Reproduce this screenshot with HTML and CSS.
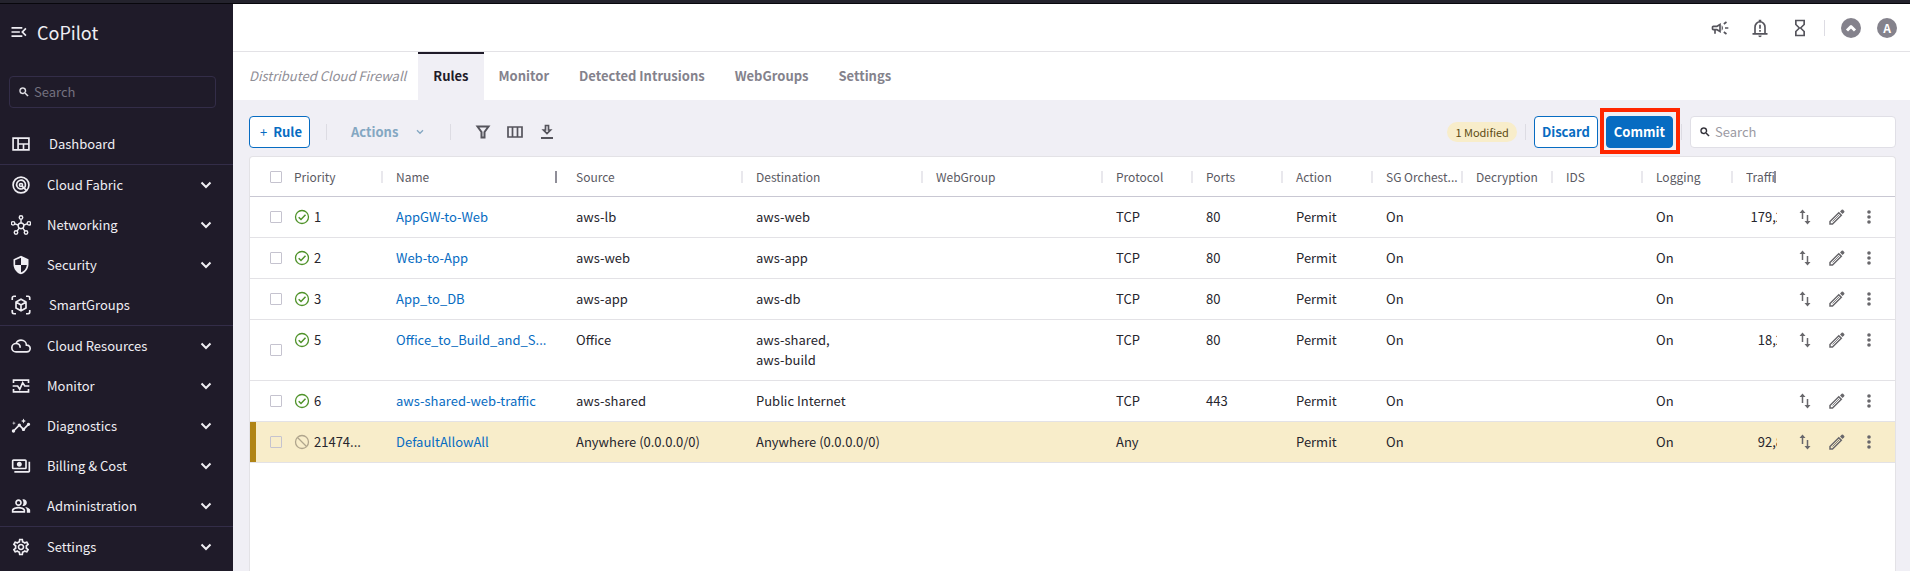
FILE: index.html
```html
<!DOCTYPE html>
<html lang="en">
<head>
<meta charset="utf-8">
<title>CoPilot</title>
<link rel="stylesheet" href="styles.css">
</head>
<body>
<svg class="sprite" aria-hidden="true">
  <symbol id="menu-open" viewBox="0 0 24 24"><path d="M3 18h13v-2H3v2zm0-5h10v-2H3v2zm0-7v2h13V6H3zm18 9.59L17.42 12 21 8.41 19.59 7l-5 5 5 5L21 15.59z"/></symbol>
  <symbol id="search" viewBox="0 0 24 24"><path d="M15.5 14h-.79l-.28-.27A6.47 6.47 0 0 0 16 9.5 6.5 6.5 0 1 0 9.500 16c1.610 0 3.090-.59 4.230-1.570l.27.28v.79l5 4.990L20.490 19l-4.990-5zm-6 0C7.010 14 5 11.990 5 9.500S7.010 5 9.500 5 14 7.010 14 9.500 11.990 14 9.500 14z" stroke="currentColor" stroke-width=".8"/></symbol>
  <symbol id="dashboard" viewBox="0 0 24 24"><path d="M2.500 5h19v14h-19zM8.500 5v14M8.500 12h13M15 12v7" fill="none" stroke="currentColor" stroke-width="2"/></symbol>
  <symbol id="fabric" viewBox="0 0 24 24"><g fill="none" stroke="currentColor" stroke-width="2"><circle cx="12" cy="12" r="9.500"/><path d="M15.500 15.500A5.300 5.300 0 1 1 17.300 12c0 1.500-.5 2.600-1.300 3.500"/><circle cx="12" cy="12" r="1.800"/><path d="M13 13l5.500 5.500"/></g></symbol>
  <symbol id="network" viewBox="0 0 24 24"><g fill="none" stroke="currentColor" stroke-width="1.700"><circle cx="12" cy="13" r="3.400"/><circle cx="12" cy="3" r="2.100"/><circle cx="2.500" cy="10" r="2.100"/><circle cx="21.500" cy="10" r="2.100"/><circle cx="6" cy="21" r="2.100"/><circle cx="18" cy="21" r="2.100"/><path d="M12 5v4.500M4.600 10.700l4 1.300M19.400 10.700l-4 1.300M7.300 19.200l2.600-3.400M16.700 19.200l-2.600-3.400"/></g></symbol>
  <symbol id="shield" viewBox="0 0 24 24"><path d="M12 1L3 5v6c0 5.550 3.840 10.740 9 12 5.160-1.260 9-6.450 9-12V5l-9-4zm0 10.990h7c-.53 4.120-3.280 7.790-7 8.940V12H5V6.300l7-3.110v8.800z" /></symbol>
  <symbol id="cube" viewBox="0 0 24 24"><g fill="none" stroke="currentColor" stroke-width="2" stroke-linejoin="round"><path d="M1.500 6V3.500a2 2 0 0 1 2-2H6M18 1.500h2.500a2 2 0 0 1 2 2V6M22.500 18v2.500a2 2 0 0 1-2 2H18M6 22.500H3.500a2 2 0 0 1-2-2V18"/><path d="M12 5l6 3.500v7L12 19l-6-3.500v-7zM6 8.500l6 3.500 6-3.500M12 12v7"/></g></symbol>
  <symbol id="cloud" viewBox="0 0 24 24"><path d="M6 19h13a4 4 0 0 0 0-8h-.5C18.500 7.500 15.500 5 12 5 9 5 7 6.500 6 9a5 5 0 0 0 0 10zM6 9c3 0 5 2 5 5" fill="none" stroke="currentColor" stroke-width="2"/></symbol>
  <symbol id="monitor" viewBox="0 0 24 24"><path d="M3 8.500V5h18v3.500M3 15.500V19h18v-3.500M2 12h6l2.500 4 3.500-8 2.500 4H22" fill="none" stroke="currentColor" stroke-width="2"/></symbol>
  <symbol id="insights" viewBox="0 0 24 24"><path d="M21 8c-1.450 0-2.260 1.440-1.930 2.510l-3.550 3.560c-.3-.09-.74-.09-1.040 0l-2.550-2.550C12.270 10.450 11.460 9 10 9c-1.450 0-2.270 1.440-1.930 2.520l-4.560 4.550C2.440 15.740 1 16.550 1 18c0 1.100.9 2 2 2 1.450 0 2.260-1.440 1.930-2.510l4.550-4.560c.3.09.74.09 1.040 0l2.550 2.550C12.730 16.550 13.540 18 15 18c1.450 0 2.270-1.440 1.930-2.520l3.560-3.550C21.560 12.260 23 11.450 23 10c0-1.100-.9-2-2-2zM15 9l.94-2.070L18 6l-2.060-.93L15 3l-.92 2.070L12 6l2.080.93zM3.500 11L4 9l2-.5L4 8l-.5-2L3 8l-2 .5L3 9z"/></symbol>
  <symbol id="billing" viewBox="0 0 24 24"><path d="M19 14V6c0-1.100-.9-2-2-2H3c-1.100 0-2 .9-2 2v8c0 1.100.9 2 2 2h14c1.100 0 2-.9 2-2zm-2 0H3V6h14v8zm-7-7c-1.660 0-3 1.340-3 3s1.340 3 3 3 3-1.340 3-3-1.340-3-3-3zm13 0v11c0 1.100-.9 2-2 2H4v-2h17V7h2z"/></symbol>
  <symbol id="people" viewBox="0 0 24 24"><path d="M16.670 13.130C18.040 14.060 19 15.320 19 17v3h4v-3c0-2.180-3.570-3.470-6.330-3.870zM15 12c2.210 0 4-1.790 4-4s-1.790-4-4-4c-.47 0-.91.1-1.330.24C14.500 5.270 15 6.580 15 8s-.5 2.730-1.330 3.760c.42.14.86.24 1.330.24zM9 12c2.210 0 4-1.790 4-4s-1.790-4-4-4-4 1.790-4 4 1.790 4 4 4zm0-6c1.100 0 2 .9 2 2s-.9 2-2 2-2-.9-2-2 .9-2 2-2zM9 13c-2.670 0-8 1.340-8 4v3h16v-3c0-2.660-5.330-4-8-4zm6 5H3v-.99C3.200 16.290 6.300 15 9 15s5.800 1.290 6 2v1z"/></symbol>
  <symbol id="gear" viewBox="0 0 24 24"><path d="M19.430 12.980c.04-.32.07-.64.07-.98 0-.34-.03-.66-.07-.98l2.110-1.650c.19-.15.24-.42.12-.64l-2-3.460c-.09-.16-.26-.25-.44-.25-.06 0-.12.01-.17.03l-2.490 1c-.52-.4-1.080-.73-1.690-.98l-.38-2.650C14.460 2.180 14.250 2 14 2h-4c-.25 0-.46.18-.49.42l-.38 2.650c-.61.25-1.170.59-1.690.98l-2.490-1c-.06-.02-.12-.03-.18-.03-.17 0-.34.09-.43.25l-2 3.460c-.13.22-.07.49.12.64l2.110 1.650c-.04.32-.07.65-.07.98 0 .33.03.66.07.98l-2.110 1.650c-.19.15-.24.42-.12.64l2 3.460c.09.16.26.25.44.25.06 0 .12-.01.17-.03l2.490-1c.52.4 1.080.73 1.690.98l.38 2.650c.03.24.24.42.49.42h4c.25 0 .46-.18.49-.42l.38-2.650c.61-.25 1.170-.59 1.690-.98l2.490 1c.06.02.12.03.18.03.17 0 .34-.09.43-.25l2-3.460c.12-.22.07-.49-.12-.64l-2.110-1.650zm-1.980-1.710c.04.31.05.52.05.73 0 .21-.02.43-.05.73l-.14 1.130.89.7 1.080.84-.7 1.210-1.270-.51-1.040-.42-.9.68c-.43.32-.84.56-1.250.73l-1.060.43-.16 1.130-.2 1.350h-1.400l-.19-1.350-.16-1.130-1.060-.43c-.43-.18-.83-.41-1.230-.71l-.91-.7-1.060.43-1.270.51-.7-1.210 1.080-.84.89-.7-.14-1.130c-.03-.31-.05-.54-.05-.74s.02-.43.05-.73l.14-1.130-.89-.7-1.080-.84.7-1.210 1.270.51 1.040.42.9-.68c.43-.32.84-.56 1.250-.73l1.060-.43.16-1.130.2-1.350h1.390l.19 1.350.16 1.130 1.060.43c.43.18.83.41 1.230.71l.91.7 1.060-.43 1.270-.51.7 1.210-1.070.85-.89.7.14 1.130zM12 8c-2.210 0-4 1.790-4 4s1.790 4 4 4 4-1.790 4-4-1.790-4-4-4zm0 6c-1.100 0-2-.9-2-2s.9-2 2-2 2 .9 2 2-.9 2-2 2z"/></symbol>
  <symbol id="chevron" viewBox="0 0 12 12"><path d="M1.500 3.500L6 8l4.500-4.500" fill="none" stroke="currentColor" stroke-width="2"/></symbol>
  <symbol id="megaphone" viewBox="0 0 24 24"><path d="M18 11v2h4v-2h-4zm-2 6.610c.96.71 2.210 1.650 3.200 2.390.4-.53.8-1.070 1.200-1.600-.99-.74-2.240-1.680-3.200-2.400-.4.54-.8 1.080-1.200 1.610zM20.400 5.600c-.4-.53-.8-1.070-1.200-1.600-.99.74-2.240 1.680-3.200 2.400.4.53.8 1.070 1.200 1.600.96-.72 2.210-1.650 3.200-2.400zM4 9c-1.100 0-2 .9-2 2v2c0 1.100.9 2 2 2h1v4h2v-4h1l5 3V6L8 9H4zm5.030 1.710L11 9.530v4.940l-1.970-1.180-.48-.29H4v-2h4.550l.48-.29zM15.500 12c0-1.330-.58-2.530-1.500-3.350v6.690c.92-.81 1.500-2.010 1.500-3.340z"/></symbol>
  <symbol id="bell" viewBox="0 0 24 24"><path d="M3 19h18M6 19v-8a6 6.500 0 0 1 12 0v8" fill="none" stroke="currentColor" stroke-width="2"/><path d="M10.500 2h3v3h-3zM10 21h4a2 2 0 0 1-4 0zM11 8h2v5h-2zM11 14.500h2v2h-2z"/></symbol>
  <symbol id="hourglass" viewBox="0 0 24 24"><path d="M6 2v6h.01L6 8.010 10 12l-4 4 .01.01H6V22h12v-5.990h-.01L18 16l-4-4 4-3.990-.01-.01H18V2H6zm10 14.500V20H8v-3.500l4-4 4 4zm-4-5l-4-4V4h8v3.500l-4 4z"/></symbol>
  <symbol id="peak" viewBox="0 0 20 20"><path d="M6 12.500L10 8.500l4 4" fill="none" stroke="currentColor" stroke-width="3" stroke-linejoin="round"/></symbol>
  <symbol id="filter" viewBox="0 0 16 16"><path d="M2.500 2.500h11L9.500 8v5.500h-3V8z" fill="none" stroke="currentColor" stroke-width="2"/></symbol>
  <symbol id="columns" viewBox="0 0 16 16"><path d="M1 3h14v10H1zM5.500 3v10M10.500 3v10" fill="none" stroke="currentColor" stroke-width="1.700"/></symbol>
  <symbol id="download" viewBox="0 0 16 16"><path d="M2 13h12v2H2z"/><path d="M6.500 1.500h3V6h2L8 9.500 4.500 6h2z" fill="none" stroke="currentColor" stroke-width="1.700"/></symbol>
  <symbol id="ok" viewBox="0 0 16 16"><circle cx="8" cy="8" r="6.500" fill="none" stroke="currentColor" stroke-width="1.300"/><path d="M4.700 8.200L7 10.500l4.500-4.700" fill="none" stroke="currentColor" stroke-width="1.500"/></symbol>
  <symbol id="off" viewBox="0 0 16 16"><circle cx="8" cy="8" r="6.500" fill="none" stroke="currentColor" stroke-width="1.300"/><path d="M3.500 3.500l9 9" fill="none" stroke="currentColor" stroke-width="1.300"/></symbol>
  <symbol id="swap" viewBox="0 0 16 16"><path d="M5.500 10V2M10.500 6v8" fill="none" stroke="currentColor" stroke-width="1.500"/><path d="M5.500 .5L8.500 4h-6zM10.500 15.500l3-3.500h-6z"/></symbol>
  <symbol id="edit" viewBox="0 0 16 16"><path d="M1 12.500L9.800 3.700l2.500 2.500L3.500 15H1z" fill="none" stroke="currentColor" stroke-width="1.500"/><path d="M3.500 12.500l7-7" stroke="currentColor" stroke-width=".8"/><path d="M11 2.500l1.700-1.700a1 1 0 0 1 1.400 0l1.100 1.100a1 1 0 0 1 0 1.400L13.500 5z"/></symbol>
  <symbol id="more" viewBox="0 0 16 16"><circle cx="8" cy="3" r="1.800"/><circle cx="8" cy="8" r="1.800"/><circle cx="8" cy="13" r="1.800"/></symbol>
</svg>

<div class="topstrip"></div>
<div class="app">
  <aside class="sidebar">
    <div class="brand">
      <button class="icon-btn" aria-label="Collapse menu"><svg class="icon-20"><use href="#menu-open"/></svg></button>
      <span>CoPilot</span>
    </div>
    <label class="search search-dark"><svg class="icon-12"><use href="#search"/></svg><input type="text" placeholder="Search" aria-label="Search menu"></label>
    <nav class="nav">
      <a class="nav-item direct" href="#"><svg class="icon-20"><use href="#dashboard"/></svg><span>Dashboard</span></a>
      <hr>
      <button class="nav-item"><svg class="icon-20"><use href="#fabric"/></svg><span>Cloud Fabric</span><svg class="icon-12"><use href="#chevron"/></svg></button>
      <button class="nav-item"><svg class="icon-20"><use href="#network"/></svg><span>Networking</span><svg class="icon-12"><use href="#chevron"/></svg></button>
      <button class="nav-item"><svg class="icon-20"><use href="#shield"/></svg><span>Security</span><svg class="icon-12"><use href="#chevron"/></svg></button>
      <a class="nav-item direct" href="#"><svg class="icon-20"><use href="#cube"/></svg><span>SmartGroups</span></a>
      <hr>
      <button class="nav-item"><svg class="icon-20"><use href="#cloud"/></svg><span>Cloud Resources</span><svg class="icon-12"><use href="#chevron"/></svg></button>
      <button class="nav-item"><svg class="icon-20"><use href="#monitor"/></svg><span>Monitor</span><svg class="icon-12"><use href="#chevron"/></svg></button>
      <button class="nav-item"><svg class="icon-20"><use href="#insights"/></svg><span>Diagnostics</span><svg class="icon-12"><use href="#chevron"/></svg></button>
      <button class="nav-item"><svg class="icon-20"><use href="#billing"/></svg><span>Billing &amp; Cost</span><svg class="icon-12"><use href="#chevron"/></svg></button>
      <button class="nav-item"><svg class="icon-20"><use href="#people"/></svg><span>Administration</span><svg class="icon-12"><use href="#chevron"/></svg></button>
      <hr>
      <button class="nav-item"><svg class="icon-20"><use href="#gear"/></svg><span>Settings</span><svg class="icon-12"><use href="#chevron"/></svg></button>
    </nav>
  </aside>

  <main class="main">
    <header class="header">
      <button class="icon-btn" aria-label="Announcements"><svg class="icon-20"><use href="#megaphone"/></svg></button>
      <button class="icon-btn" aria-label="Alerts"><svg class="icon-20"><use href="#bell"/></svg></button>
      <button class="icon-btn" aria-label="Tasks"><svg class="icon-20"><use href="#hourglass"/></svg></button>
      <span class="divider"></span>
      <button class="avatar" aria-label="Controller"><svg class="icon-20"><use href="#peak"/></svg></button>
      <button class="avatar">A</button>
    </header>
    <nav class="tabs">
      <span class="crumb">Distributed Cloud Firewall</span>
      <a class="tab active" href="#">Rules</a>
      <a class="tab" href="#">Monitor</a>
      <a class="tab" href="#">Detected Intrusions</a>
      <a class="tab" href="#">WebGroups</a>
      <a class="tab" href="#">Settings</a>
    </nav>
    <section class="content">
      <div class="toolbar">
        <button class="btn add"><span class="plus">+</span>Rule</button>
        <span class="divider"></span>
        <button class="actions-btn" disabled>Actions<svg class="icon-8"><use href="#chevron"/></svg></button>
        <span class="divider"></span>
        <div class="tools">
          <button class="icon-btn" aria-label="Filter"><svg class="icon-16"><use href="#filter"/></svg></button>
          <button class="icon-btn" aria-label="Columns"><svg class="icon-16"><use href="#columns"/></svg></button>
          <button class="icon-btn" aria-label="Download"><svg class="icon-16"><use href="#download"/></svg></button>
        </div>
        <div class="right">
          <span class="pill">1 Modified</span>
          <span class="divider"></span>
          <button class="btn">Discard</button>
          <span class="highlight"><button class="btn primary">Commit</button></span>
          <span class="divider"></span>
          <label class="search"><svg class="icon-12"><use href="#search"/></svg><input type="text" placeholder="Search" aria-label="Search rules"></label>
        </div>
      </div>
      <div class="panel">
        <table class="rules">
          <colgroup><col class="c-check"><col class="c-priority"><col class="c-wide"><col class="c-wide"><col class="c-wide"><col class="c-wide"><col class="c-narrow"><col class="c-narrow"><col class="c-narrow"><col class="c-narrow"><col class="c-narrow"><col class="c-narrow"><col class="c-narrow"><col><col class="c-tools"></colgroup>
          <thead>
            <tr>
              <th class="check"><input type="checkbox" aria-label="Select all"></th>
              <th class="priority"><div>Priority</div></th><th class="pinned"><div>Name</div></th><th><div>Source</div></th><th><div>Destination</div></th><th><div>WebGroup</div></th><th><div>Protocol</div></th><th><div>Ports</div></th><th><div>Action</div></th><th><div>SG Orchest...</div></th><th><div>Decryption</div></th><th><div>IDS</div></th><th><div>Logging</div></th><th class="last"><div><span>Traffic</span></div></th><th></th>
            </tr>
          </thead>
          <tbody>
            <tr><td class="check"><input type="checkbox" aria-label="Select rule 1"></td><td class="priority"><svg class="icon-16 ok"><use href="#ok"/></svg>1</td><td><a href="#">AppGW-to-Web</a></td><td>aws-lb</td><td>aws-web</td><td></td><td>TCP</td><td>80</td><td>Permit</td><td>On</td><td></td><td></td><td>On</td><td class="traffic"><div>179,2</div></td><td class="tools-cell"><div><button class="icon-btn" aria-label="Move"><svg class="icon-16"><use href="#swap"/></svg></button><button class="icon-btn" aria-label="Edit"><svg class="icon-16"><use href="#edit"/></svg></button><button class="icon-btn" aria-label="More"><svg class="icon-16"><use href="#more"/></svg></button></div></td></tr>
            <tr><td class="check"><input type="checkbox" aria-label="Select rule 2"></td><td class="priority"><svg class="icon-16 ok"><use href="#ok"/></svg>2</td><td><a href="#">Web-to-App</a></td><td>aws-web</td><td>aws-app</td><td></td><td>TCP</td><td>80</td><td>Permit</td><td>On</td><td></td><td></td><td>On</td><td></td><td class="tools-cell"><div><button class="icon-btn" aria-label="Move"><svg class="icon-16"><use href="#swap"/></svg></button><button class="icon-btn" aria-label="Edit"><svg class="icon-16"><use href="#edit"/></svg></button><button class="icon-btn" aria-label="More"><svg class="icon-16"><use href="#more"/></svg></button></div></td></tr>
            <tr><td class="check"><input type="checkbox" aria-label="Select rule 3"></td><td class="priority"><svg class="icon-16 ok"><use href="#ok"/></svg>3</td><td><a href="#">App_to_DB</a></td><td>aws-app</td><td>aws-db</td><td></td><td>TCP</td><td>80</td><td>Permit</td><td>On</td><td></td><td></td><td>On</td><td></td><td class="tools-cell"><div><button class="icon-btn" aria-label="Move"><svg class="icon-16"><use href="#swap"/></svg></button><button class="icon-btn" aria-label="Edit"><svg class="icon-16"><use href="#edit"/></svg></button><button class="icon-btn" aria-label="More"><svg class="icon-16"><use href="#more"/></svg></button></div></td></tr>
            <tr><td class="check"><input type="checkbox" aria-label="Select rule 5"></td><td class="priority"><svg class="icon-16 ok"><use href="#ok"/></svg>5</td><td><a href="#">Office_to_Build_and_S...</a></td><td>Office</td><td>aws-shared,<br>aws-build</td><td></td><td>TCP</td><td>80</td><td>Permit</td><td>On</td><td></td><td></td><td>On</td><td class="traffic"><div>18,2</div></td><td class="tools-cell"><div><button class="icon-btn" aria-label="Move"><svg class="icon-16"><use href="#swap"/></svg></button><button class="icon-btn" aria-label="Edit"><svg class="icon-16"><use href="#edit"/></svg></button><button class="icon-btn" aria-label="More"><svg class="icon-16"><use href="#more"/></svg></button></div></td></tr>
            <tr><td class="check"><input type="checkbox" aria-label="Select rule 6"></td><td class="priority"><svg class="icon-16 ok"><use href="#ok"/></svg>6</td><td><a href="#">aws-shared-web-traffic</a></td><td>aws-shared</td><td>Public Internet</td><td></td><td>TCP</td><td>443</td><td>Permit</td><td>On</td><td></td><td></td><td>On</td><td></td><td class="tools-cell"><div><button class="icon-btn" aria-label="Move"><svg class="icon-16"><use href="#swap"/></svg></button><button class="icon-btn" aria-label="Edit"><svg class="icon-16"><use href="#edit"/></svg></button><button class="icon-btn" aria-label="More"><svg class="icon-16"><use href="#more"/></svg></button></div></td></tr>
            <tr class="modified"><td class="check"><input type="checkbox" aria-label="Select default rule"></td><td class="priority"><svg class="icon-16 off"><use href="#off"/></svg>21474...</td><td><a href="#">DefaultAllowAll</a></td><td>Anywhere (0.0.0.0/0)</td><td>Anywhere (0.0.0.0/0)</td><td></td><td>Any</td><td></td><td>Permit</td><td>On</td><td></td><td></td><td>On</td><td class="traffic"><div>92,8</div></td><td class="tools-cell"><div><button class="icon-btn" aria-label="Move"><svg class="icon-16"><use href="#swap"/></svg></button><button class="icon-btn" aria-label="Edit"><svg class="icon-16"><use href="#edit"/></svg></button><button class="icon-btn" aria-label="More"><svg class="icon-16"><use href="#more"/></svg></button></div></td></tr>
          </tbody>
        </table>
      </div>
    </section>
  </main>
</div>
</body>
</html>
```
FILE: styles.css
```css
*, *::before, *::after { box-sizing: border-box; }
body {
  margin: 0;
  height: 100vh;
  display: flex;
  flex-direction: column;
  overflow: hidden;
  font: 13px/20px "Noto Sans CJK SC", "Noto Sans", sans-serif;
  color: #26252d;
  background: #fff;
}
button, input { font: inherit; color: inherit; }
button { border: 0; padding: 0; background: none; }
a { text-decoration: none; color: inherit; }
svg { display: block; flex: none; fill: currentColor; }
.sprite { position: absolute; width: 0; height: 0; }
.icon-20 { width: 20px; height: 20px; }
.icon-16 { width: 16px; height: 16px; }
.icon-12 { width: 12px; height: 12px; }
.icon-8 { width: 8px; height: 8px; }
.icon-btn { display: flex; align-items: center; justify-content: center; }

.topstrip { flex: none; height: 4px; background: #24232d; border-bottom: 1px solid #08070c; }
.app { flex: 1; display: flex; min-height: 0; }

.sidebar {
  flex: none;
  width: 233px;
  background: #1f1b29;
  color: #efeef3;
  overflow: hidden;
}
.brand { display: flex; align-items: center; gap: 8px; height: 56px; padding-left: 9px; font-size: 18px; }
.search {
  display: flex;
  align-items: center;
  gap: 4px;
  height: 32px;
  padding: 0 8px;
  border: 1px solid #e0dfe6;
  border-radius: 4px;
  background: #fff;
}
.search input { flex: 1; min-width: 0; border: 0; padding: 0; outline: 0; background: none; }
.search input::placeholder { color: #9b9aa3; opacity: 1; }
.search-dark { margin: 16px 17px 16px 9px; background: none; border-color: #332d48; }
.search-dark input::placeholder { color: #74717f; }
.nav hr { margin: 0; border: 0; height: 1px; background: #332d48; }
.nav-item {
  display: flex;
  align-items: center;
  width: 100%;
  height: 40px;
  padding: 0 21px 0 11px;
  gap: 16px;
  text-align: left;
}
.nav-item span { flex: 1; }
.nav-item.direct { gap: 18px; }

.main { flex: 1; min-width: 0; display: flex; flex-direction: column; background: #f0eff5; }
.header {
  flex: none;
  display: flex;
  align-items: center;
  justify-content: flex-end;
  height: 48px;
  padding-right: 13px;
  gap: 16px;
  background: #fff;
  border-bottom: 1px solid #e3e2e6;
  color: #55545c;
}
.header .icon-btn { margin-right: 4px; }
.header .divider { margin: 0 0 0 -6px; }
.divider { flex: none; width: 1px; height: 16px; background: #dddce3; }
.avatar {
  display: flex;
  align-items: center;
  justify-content: center;
  width: 20px;
  height: 20px;
  border-radius: 50%;
  background: #84828c;
  color: #fff;
  font-size: 12px;
  font-weight: 700;
}
.tabs { flex: none; display: flex; height: 48px; background: #fff; }
.crumb { padding: 14px 12px 14px 16px; font-style: italic; color: #8f8e96; }
.tab { padding: 14px 15px; font-weight: 700; color: #84828c; }
.tab.active { padding-top: 12px; border-top: 2px solid #1f1b29; background: #f0eff5; color: #1f1b29; }

.content { flex: 1; min-height: 0; display: flex; flex-direction: column; padding: 16px 14px 0 16px; }
.toolbar { display: flex; align-items: center; gap: 16px; height: 32px; margin-bottom: 8px; }
.btn {
  height: 32px;
  padding: 0 7px;
  border: 1px solid #076cc2;
  border-radius: 4px;
  background: #fff;
  color: #076cc2;
  font-weight: 700;
}
.btn.primary { background: #076cc2; color: #fff; }
.btn.add { display: flex; align-items: center; gap: 6px; padding-left: 10px; }
.plus { font-weight: 400; }
.actions-btn { display: flex; align-items: center; gap: 18px; margin-left: 8px; padding-right: 10px; color: #84a7c2; font-weight: 700; }
.tools { display: flex; gap: 16px; margin-left: 8px; color: #55545c; }
.right { display: flex; align-items: center; gap: 8px; margin-left: auto; }
.right .search { width: 206px; }
.pill { padding: 0 8px; border-radius: 10px; background: #f8edca; color: #5c4a12; font-size: 11px; }
.highlight { position: relative; }
.highlight::after { content: ""; position: absolute; inset: -8px -7px -6px -6px; border: 4px solid #ff2600; }

.panel { flex: 1; min-height: 0; overflow: hidden; border: 1px solid #e3e2e6; border-bottom: 0; border-radius: 4px 4px 0 0; background: #fff; }
.rules { width: 100%; table-layout: fixed; border-collapse: separate; border-spacing: 0; }
.c-check { width: 34px; }
.c-priority { width: 100px; }
.c-wide { width: 180px; }
.c-narrow { width: 90px; }
.c-tools { width: 118px; }
th, td { padding: 10px 0 10px 12px; text-align: left; vertical-align: top; white-space: nowrap; overflow: hidden; border-bottom: 1px solid #e3e2e6; }
th { height: 40px; padding: 10px 0 9px 12px; border-color: #c9c8d3; color: #5b5a63; font-size: 12px; font-weight: 400; }
th div { display: flex; align-items: center; }
th div::after { content: ""; width: 2px; height: 12px; margin: 0 1px 0 auto; background: #e9e8ed; flex: none; }
th.pinned div::after { margin-right: 7px; background: #8f8e98; }
th.last span { width: 29px; overflow: hidden; }
th.last div::after { background: #8f8e98; }
.check { padding: 0 0 0 20px; vertical-align: middle; }
.priority { padding-left: 10px; }
td.priority svg { float: left; margin: 2px 4px 0 0; }
.ok { color: #4f9229; }
.off { color: #b0a58d; }
input[type="checkbox"] { appearance: none; display: block; width: 12px; height: 12px; margin: 0; border: 1px solid #c5c3cf; border-radius: 1px; }
td a { color: #076cc2; }
.traffic div { width: 37px; text-align: right; }
.tools-cell { padding-left: 12px; color: #68676b; }
.tools-cell div { display: flex; }
.tools-cell .icon-btn { width: 32px; height: 20px; }
.modified td { background: #f8edca; }
.modified .check { box-shadow: inset 6px 0 #b08415; }
```
